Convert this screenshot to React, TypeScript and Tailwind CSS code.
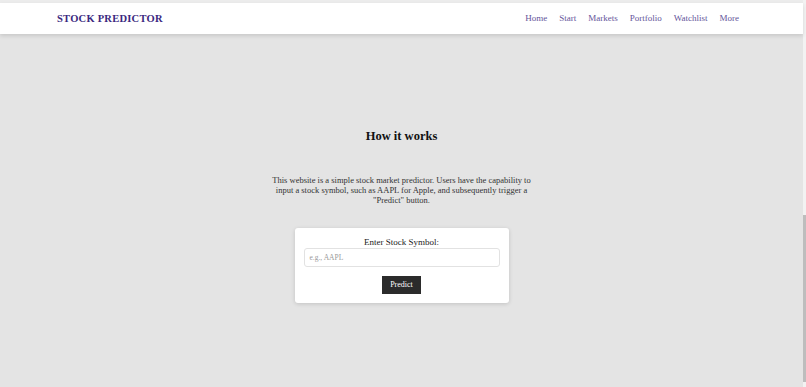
import React from "react";

export default function App() {
  const links = ["Home", "Start", "Markets", "Portfolio", "Watchlist", "More"];
  return (
    <div
      className="w-[806px] h-[387px] bg-[#e4e4e4] flex overflow-hidden"
      style={{ fontFamily: '"Liberation Serif", "DejaVu Serif", serif' }}
    >
      <div className="flex-1 flex flex-col">
        <div className="h-[3px] bg-[#ececec]" />
        <nav className="h-[31px] bg-white shadow-[0_2px_4px_rgba(0,0,0,0.12)] flex items-center justify-between pl-[57px] pr-[64px] relative z-10">
          <div className="text-[10.5px] font-bold tracking-[0.25px] text-[#3a2880]">
            STOCK PREDICTOR
          </div>
          <div className="flex gap-[12px] text-[9px] text-[#65559a]">
            {links.map((l) => (
              <span key={l}>{l}</span>
            ))}
          </div>
        </nav>
        <main className="flex flex-col items-center">
          <h1 className="mt-[93px] text-[12.5px] leading-[18px] font-bold text-[#111]">
            How it works
          </h1>
          <p className="mt-[30px] text-center text-[8.5px] leading-[10px] text-[#333]">
            This website is a simple stock market predictor. Users have the capability to
            <br />
            input a stock symbol, such as AAPL for Apple, and subsequently trigger a
            <br />
            "Predict" button.
          </p>
          <div className="mt-[23px] w-[214px] h-[75px] bg-white rounded-[3px] shadow-[0_1px_4px_rgba(0,0,0,0.15)] flex flex-col items-center px-[9px] pt-[9px]">
            <div className="text-[9px] leading-[11px] text-[#222]">Enter Stock Symbol:</div>
            <div className="w-full h-[19px] border border-[#e2e2e2] rounded-[3px] flex items-center px-[5px] text-[7.5px] text-[#999]">
              e.g., AAPL
            </div>
            <button className="mt-[9px] w-[39px] h-[18px] bg-[#2b2b2b] text-white text-[8px] flex items-center justify-center">
              Predict
            </button>
          </div>
        </main>
      </div>
      <div className="w-[3px] bg-[#f2f2f2] flex flex-col">
        <div className="h-[215px]" />
        <div className="h-[167px] bg-[#bdbdbd]" />
      </div>
    </div>
  );
}
